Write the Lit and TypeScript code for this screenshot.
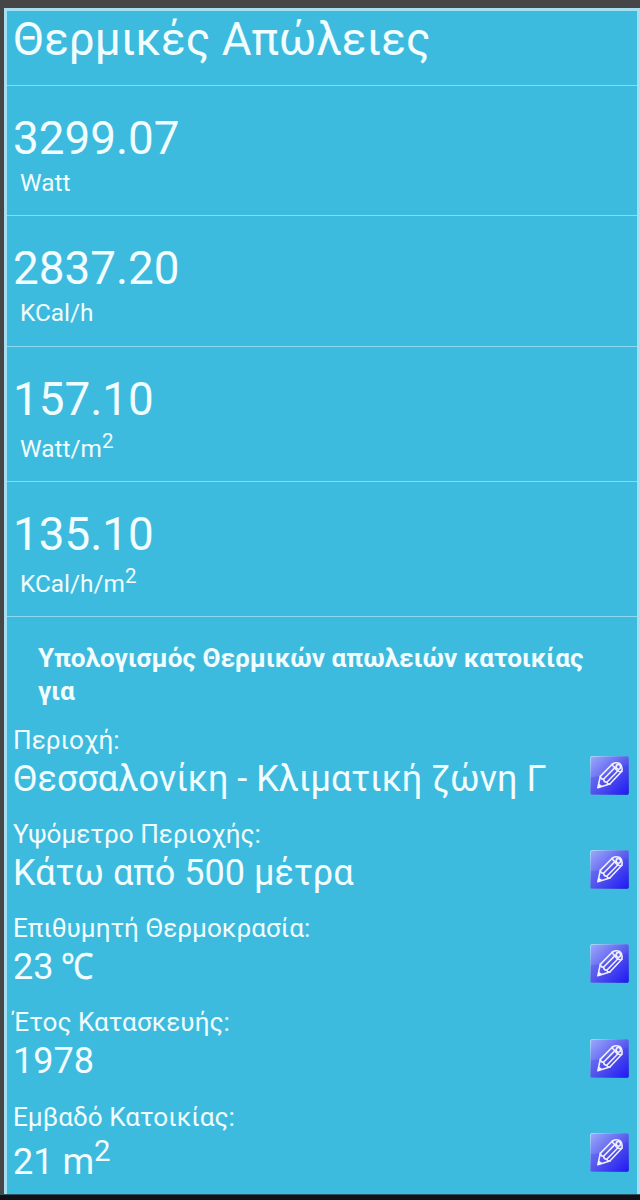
import { LitElement, html, css, svg, nothing } from "lit";
import { customElement, property } from "lit/decorators.js";

interface Result { value: string; unit: string; sup?: string; }
interface Field { label: string; value: string; symbol?: string; sup?: string; }

const RESULTS: Result[] = [
  { value: "3299.07", unit: "Watt" },
  { value: "2837.20", unit: "KCal/h" },
  { value: "157.10", unit: "Watt/m", sup: "2" },
  { value: "135.10", unit: "KCal/h/m", sup: "2" },
];

const FIELDS: Field[] = [
  { label: "Περιοχή:", value: "Θεσσαλονίκη - Κλιματική ζώνη Γ" },
  { label: "Υψόμετρο Περιοχής:", value: "Κάτω από 500 μέτρα" },
  { label: "Επιθυμητή Θερμοκρασία:", value: "23 ", symbol: "℃" },
  { label: "Έτος Κατασκευής:", value: "1978" },
  { label: "Εμβαδό Κατοικίας:", value: "21 m", sup: "2" },
];

@customElement("edit-button")
export class EditButton extends LitElement {
  static styles = css`
    :host { display: block; width: 39px; height: 39px; }
    svg { display: block; }
  `;
  render() {
    return html`<svg width="39" height="39" viewBox="0 0 39 39" role="img" aria-label="edit">
      ${svg`
      <defs>
        <linearGradient id="base" x1="0" y1="0" x2="1" y2="1">
          <stop offset="0" stop-color="#7d8cf4"/>
          <stop offset="0.5" stop-color="#5355ec"/>
          <stop offset="1" stop-color="#2018f6"/>
        </linearGradient>
        <linearGradient id="gloss" x1="0" y1="0" x2="1" y2="0.6">
          <stop offset="0" stop-color="#c4d0ff" stop-opacity="0.42"/>
          <stop offset="1" stop-color="#8f8cff" stop-opacity="0.05"/>
        </linearGradient>
        <linearGradient id="rim" x1="0" y1="0" x2="1" y2="1">
          <stop offset="0" stop-color="#a9dcfa"/>
          <stop offset="0.5" stop-color="#5b78e6"/>
          <stop offset="1" stop-color="#2433d8"/>
        </linearGradient>
      </defs>
      <rect x="0.5" y="0.5" width="38" height="38" rx="1.5" fill="url(#base)" stroke="url(#rim)"/>
      <path d="M1 1H38V9C25 10 17 21 1 21Z" fill="url(#gloss)"/>
      <g fill="none" stroke="#f1efff" stroke-width="1.6" stroke-linejoin="round" stroke-linecap="round">
        <path d="M7.8 31.8L10.3 20.4L22.4 8Q25.6 5.9 29.6 7.4Q33 10.2 31.8 15.3L19.8 28Z"/>
        <path d="M10.3 20.4Q10.8 23.6 13.5 23.2Q14 26.6 16.8 26.2Q17.2 28.4 19.8 28"/>
        <path d="M13.5 23.2L25.2 11.4M16.8 26.2L28 14.8"/>
        <path d="M22.4 8Q22.8 11 25.2 11.4Q25.8 14.4 28 14.8Q29.6 15.9 31.8 15.3"/>
        <ellipse cx="28.4" cy="10.8" rx="2.1" ry="2.4"/>
      </g>
      <path d="M7.8 31.8L8.8 27.6L12.2 30Z" fill="#f4f2ff"/>`}
    </svg>`;
  }
}

@customElement("result-row")
export class ResultRow extends LitElement {
  @property({ attribute: false }) item!: Result;
  static styles = css`
    :host { display: block; box-sizing: border-box; padding: 24px 6px 0; border-top: 1.5px solid #8ed9f0; }
    .value { font-size: 45.8px; line-height: 58px; }
    .unit { font-size: 24.4px; line-height: 29px; padding-left: 7px; }
    .raised { padding-top: 5px; }
    sup { font-size: 20.5px; line-height: 0; vertical-align: 9px; }
  `;
  render() {
    const { value, unit, sup } = this.item;
    return html`<div class="value">${value}</div>
      <div class="unit ${sup ? "raised" : ""}">${unit}${sup ? html`<sup>${sup}</sup>` : nothing}</div>`;
  }
}

@customElement("field-row")
export class FieldRow extends LitElement {
  @property({ attribute: false }) item!: Field;
  static styles = css`
    :host { display: flex; justify-content: space-between; align-items: flex-start; height: 94.3px; padding: 0 8px 0 6px; }
    .label { font-size: 26.15px; line-height: 30px; }
    .value { font-size: 36.05px; line-height: 48px; }
    .raised { padding-top: 6px; }
    .text { white-space: nowrap; }
    .symbol { display: inline-block; transform: scaleX(0.9); transform-origin: left; margin-left: -1px; -webkit-text-stroke: 0.4px currentColor; }
    edit-button { margin-top: 31.2px; }
    sup { font-size: 29.3px; line-height: 0; vertical-align: 12.7px; }
  `;
  render() {
    const { label, value, symbol, sup } = this.item;
    return html`<div class="text">
        <div class="label">${label}</div>
        <div class="value ${sup ? "raised" : ""}">${value}${symbol ? html`<span class="symbol">${symbol}</span>` : nothing}${sup ? html`<sup>${sup}</sup>` : nothing}</div>
      </div>
      <edit-button></edit-button>`;
  }
}

@customElement("app-root")
export class AppRoot extends LitElement {
  static styles = css`
    :host {
      display: flex; flex-direction: column; box-sizing: border-box; height: 1200px; overflow: hidden;
      padding: 8px 0 0 4px; background: #464646; color: #f2fdff;
      font-family: Roboto, "Noto Sans", "Noto Sans CJK SC", sans-serif;
    }
    .panel {
      flex: 1; min-height: 0; overflow: hidden; background: #3cbbde;
      border: solid #a6def2; border-width: 3px 3px 0 3px;
    }
    .title { margin: 0; height: 74px; padding-left: 6px; box-sizing: border-box; font-size: 45.75px; font-weight: 400; line-height: 58px; }
    .results { display: grid; grid-template-rows: 130px 130.5px 135px 135.5px; }
    .heading { margin: 0; padding: 25px 31px 0 31px; height: 108.6px; box-sizing: border-box; border-top: 1.5px solid #8ed9f0; font-size: 26.2px; font-weight: 700; line-height: 33px; }
    .bottom { height: 6px; margin-left: -4px; background: #101018; border-top: 1px solid #34505c; box-sizing: border-box; }
  `;
  render() {
    return html`<main class="panel">
        <h1 class="title">Θερμικές Απώλειες</h1>
        <section class="results">${RESULTS.map((r) => html`<result-row .item=${r}></result-row>`)}</section>
        <h2 class="heading">Υπολογισμός Θερμικών απωλειών κατοικίας για</h2>
        <section>${FIELDS.map((f) => html`<field-row .item=${f}></field-row>`)}</section>
      </main>
      <div class="bottom"></div>`;
  }
}
